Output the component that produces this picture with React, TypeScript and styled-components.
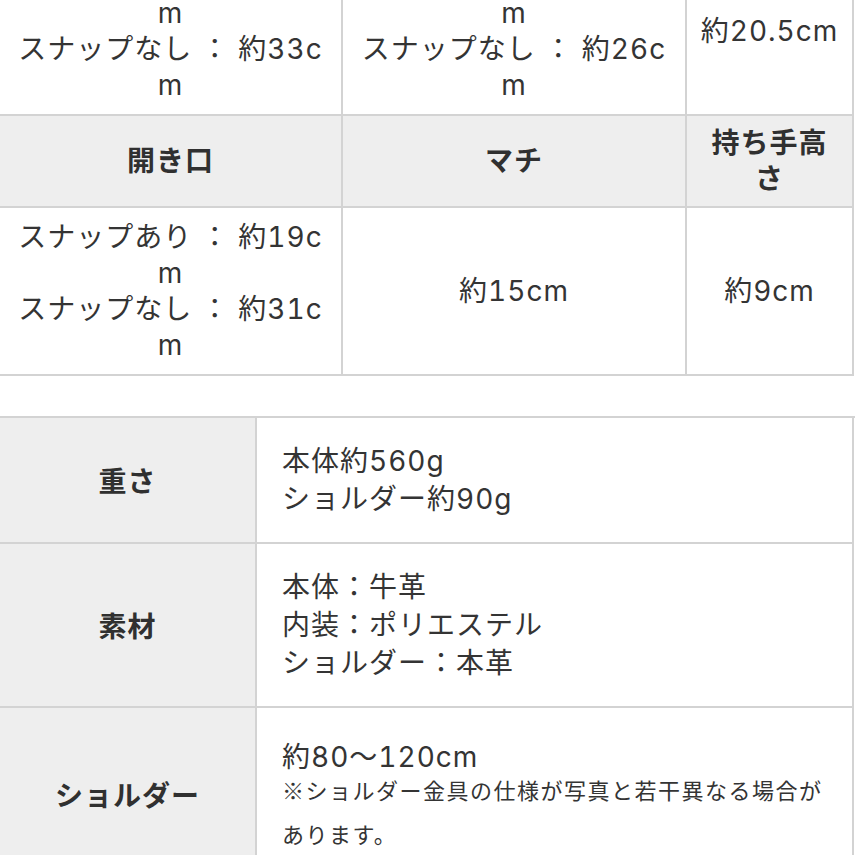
import React from "react";
import styled, { createGlobalStyle } from "styled-components";

const BORDER = "#d3d3d3";
const HEAD_BG = "#eeeeee";

const GlobalStyle = createGlobalStyle`
  html, body {
    margin: 0;
    padding: 0;
    background: #ffffff;
  }
  body {
    font-family: "Inter", "Noto Sans CJK JP", sans-serif;
    font-variant-numeric: tabular-nums;
    color: #343434;
    overflow: hidden;
  }
`;

const Page = styled.div`
  width: 855px;
  margin-top: -52px;
  display: flex;
  flex-direction: column;
  gap: 40px;
`;

const SizeTable = styled.div`
  display: grid;
  grid-template-columns: 343px 344px 167px;
`;

const SizeCell = styled.div<{ $head?: boolean }>`
  box-sizing: border-box;
  border-right: 2px solid ${BORDER};
  border-bottom: 2px solid ${BORDER};
  background: ${(p) => (p.$head ? HEAD_BG : "#ffffff")};
  padding: ${(p) => (p.$head ? "9px 6px" : "11px 6px")};
  display: flex;
  flex-direction: column;
  align-items: center;
  justify-content: center;
  font-size: 28px;
  line-height: 36px;
  letter-spacing: 1px;
  font-weight: ${(p) => (p.$head ? 700 : 400)};
  color: ${(p) => (p.$head ? "#303030" : "#343434")};
  text-align: center;
  white-space: nowrap;
`;

const Line = styled.span`
  display: block;
`;

const SpecTable = styled.div`
  display: grid;
  grid-template-columns: 257px 597px;
  border-top: 2px solid ${BORDER};
`;

const SpecHead = styled.div`
  box-sizing: border-box;
  border-right: 2px solid ${BORDER};
  border-bottom: 2px solid ${BORDER};
  background: ${HEAD_BG};
  display: flex;
  align-items: center;
  justify-content: center;
  font-size: 28px;
  letter-spacing: 1px;
  font-weight: 700;
  color: #303030;
`;

const SpecValue = styled.div<{ $padTop?: number }>`
  box-sizing: border-box;
  border-right: 2px solid ${BORDER};
  border-bottom: 2px solid ${BORDER};
  padding: ${(p) => p.$padTop ?? 24}px 24px 24px 25px;
  display: flex;
  flex-direction: column;
  justify-content: center;
  font-size: 28px;
  line-height: 38px;
  letter-spacing: 1px;
  white-space: nowrap;
`;

const Note = styled.div`
  font-family: "Noto Sans CJK JP", sans-serif;
  font-size: 22px;
  line-height: 44px;
  letter-spacing: 1.5px;
  margin-top: -9px;
`;

const sep = "\u00a0：\u00a0";

const Cell: React.FC<{ lines: string[]; head?: boolean }> = ({ lines, head }) => (
  <SizeCell $head={head}>
    {lines.map((l, i) => (
      <Line key={i}>{l}</Line>
    ))}
  </SizeCell>
);

const Values: React.FC<{ lines: string[] }> = ({ lines }) => (
  <SpecValue>
    {lines.map((l, i) => (
      <Line key={i}>{l}</Line>
    ))}
  </SpecValue>
);

export default function App() {
  return (
    <>
      <GlobalStyle />
      <Page>
        <SizeTable>
          <Cell lines={[`スナップあり${sep}約24c`, "m", `スナップなし${sep}約33c`, "m"]} />
          <Cell lines={[`スナップあり${sep}約18c`, "m", `スナップなし${sep}約26c`, "m"]} />
          <Cell lines={["約20.5cm"]} />

          <Cell head lines={["開き口"]} />
          <Cell head lines={["マチ"]} />
          <Cell head lines={["持ち手高", "さ"]} />

          <Cell lines={[`スナップあり${sep}約19c`, "m", `スナップなし${sep}約31c`, "m"]} />
          <Cell lines={["約15cm"]} />
          <Cell lines={["約9cm"]} />
        </SizeTable>

        <SpecTable>
          <SpecHead>重さ</SpecHead>
          <Values lines={["本体約560g", "ショルダー約90g"]} />

          <SpecHead>素材</SpecHead>
          <Values lines={["本体：牛革", "内装：ポリエステル", "ショルダー：本革"]} />

          <SpecHead>ショルダー</SpecHead>
          <SpecValue $padTop={30}>
            <Line>約80〜120cm</Line>
            <Note>
              ※ショルダー金具の仕様が写真と若干異なる場合が
              <br />
              あります。
            </Note>
          </SpecValue>
        </SpecTable>
      </Page>
    </>
  );
}
